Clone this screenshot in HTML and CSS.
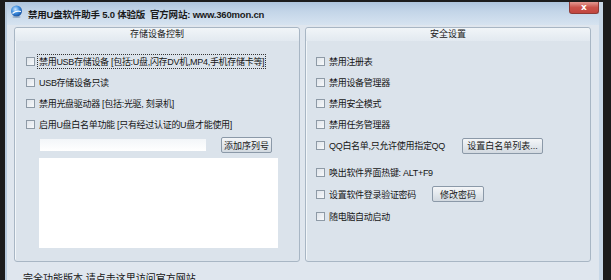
FILE: index.html
```html
<!DOCTYPE html>
<html lang="zh-CN">
<head>
    <meta charset="UTF-8">
    <title>禁用U盘软件助手 5.0 体验版</title>
    <link rel="stylesheet" href="styles.css">
</head>
<body>
    <div class="window">
        <div class="titlebar">
            <svg class="app-icon" width="13" height="13" viewBox="0 0 13 13">
                <defs>
                    <radialGradient id="globe" cx="0.4" cy="0.35" r="0.7">
                        <stop offset="0" stop-color="#cfe8ff"/>
                        <stop offset="0.5" stop-color="#3f8fe0"/>
                        <stop offset="1" stop-color="#12499a"/>
                    </radialGradient>
                </defs>
                <circle cx="6.5" cy="6" r="5.5" fill="url(#globe)"/>
                <path d="M2.5 8.5 Q6 5 11 6.5" stroke="#fff" stroke-width="1.2" fill="none"/>
                <ellipse cx="6.5" cy="12" rx="4" ry="0.9" fill="#6f8aa8" opacity="0.6"/>
            </svg>
            <span class="title">禁用U盘软件助手 5.0 体验版&nbsp;&nbsp;官方网站: www.360mon.cn</span>
            <div class="close-btn">x</div>
        </div>

        <div class="client">
            <div class="groups">
                <!-- 存储设备控制 -->
                <div class="group">
                    <div class="group-title">存储设备控制</div>
                    <div class="group-body left-body">
                        <div class="row"><span class="check"></span><span class="label focused">禁用USB存储设备 [包括:U盘,闪存DV机,MP4,手机存储卡等]</span></div>
                        <div class="row"><span class="check"></span><span class="label">USB存储设备只读</span></div>
                        <div class="row"><span class="check"></span><span class="label">禁用光盘驱动器 [包括:光驱, 刻录机]</span></div>
                        <div class="row"><span class="check"></span><span class="label">启用U盘白名单功能 [只有经过认证的U盘才能使用]</span></div>
                        <div class="serial-row">
                            <div class="text-input"></div>
                            <button class="btn btn-serial">添加序列号</button>
                        </div>
                        <div class="list-box"></div>
                    </div>
                </div>

                <!-- 安全设置 -->
                <div class="group">
                    <div class="group-title">安全设置</div>
                    <div class="group-body right-body">
                        <div class="row"><span class="check"></span><span class="label">禁用注册表</span></div>
                        <div class="row"><span class="check"></span><span class="label">禁用设备管理器</span></div>
                        <div class="row"><span class="check"></span><span class="label">禁用安全模式</span></div>
                        <div class="row"><span class="check"></span><span class="label">禁用任务管理器</span></div>
                        <div class="row"><span class="check"></span><span class="label qq-label">QQ白名单,只允许使用指定QQ</span><button class="btn btn-white">设置白名单列表...</button></div>
                        <div class="row row-gap"><span class="check"></span><span class="label">唤出软件界面热键: ALT+F9</span></div>
                        <div class="row"><span class="check"></span><span class="label pwd-label">设置软件登录验证密码</span><button class="btn btn-pwd">修改密码</button></div>
                        <div class="row"><span class="check"></span><span class="label">随电脑自动启动</span></div>
                    </div>
                </div>
            </div>
            <div class="footer">完全功能版本 请点击这里访问官方网站</div>
        </div>
    </div>
</body>
</html>
```

FILE: styles.css
```css
* {
    margin: 0;
    padding: 0;
    box-sizing: border-box;
}

body {
    background: #1c1c1c;
    font-family: 'Liberation Sans', 'Noto Sans CJK SC', sans-serif;
    font-size: 9px;
    color: #151515;
    overflow: hidden;
}

.window {
    margin: 2px 0 0 5px;
    width: 598px;
    height: 300px;
    background: #cddceb;
    border-left: 2px solid #b7c9dc;
    border-right: 4px solid #c9d8e7;
    display: flex;
    flex-direction: column;
}

/* barre de titre */
.titlebar {
    height: 23px;
    display: flex;
    align-items: flex-start;
    background: linear-gradient(180deg, #aec4dc 0%, #c3d5e8 40%, #d6e3f0 100%);
}

.app-icon {
    margin: 3px 0 0 3px;
}

.title {
    margin: 5px 0 0 5px;
    font-size: 9.5px;
    font-weight: bold;
    color: #1a1a1a;
    letter-spacing: -0.2px;
}

.close-btn {
    margin-left: auto;
    width: 30px;
    height: 12px;
    background: linear-gradient(180deg, #e39a92 0%, #c9524a 50%, #c2463f 100%);
    border: 1px solid #8f3b36;
    border-top: none;
    border-radius: 0 0 3px 3px;
    color: #fff;
    font-weight: bold;
    font-size: 9px;
    line-height: 10px;
    text-align: center;
    font-family: 'DejaVu Sans', sans-serif;
}

.client {
    flex: 1;
    background: #dfe6ee;
    padding: 2px 0 0 7px;
}

.groups {
    display: flex;
    gap: 5px;
}

.group {
    width: 286px;
    height: 235px;
    border: 1px solid #a8b6c4;
    border-radius: 3px;
    background: #dbe3eb;
    box-shadow: inset 1px 1px 0 #f2f6f9;
}

.group-title {
    height: 13px;
    text-align: center;
    line-height: 13px;
    color: #222;
    background: linear-gradient(180deg, #f1f5f8 0%, #e2e9f0 100%);
    border-radius: 3px 3px 0 0;
}

.group-body {
    padding-top: 10px;
}

.left-body {
    padding-left: 11px;
}

.right-body {
    padding-left: 10px;
}

.row {
    height: 21px;
    display: flex;
    align-items: center;
}

.row-gap {
    margin-top: 5px;
    height: 22px;
}

.right-body .row-gap ~ .row {
    height: 22px;
}

.check {
    width: 9px;
    height: 9px;
    border: 1px solid #8e9aa6;
    background: linear-gradient(135deg, #dfe4ea 0%, #f7f9fb 100%);
    margin-right: 3px;
    flex-shrink: 0;
}

.label {
    white-space: nowrap;
    padding: 0 1px;
    letter-spacing: -0.3px;
}

.focused {
    outline: 1px dotted #333;
}

.qq-label {
    width: 134px;
}

.pwd-label {
    width: 104px;
}

.btn {
    font-family: inherit;
    font-size: 9px;
    height: 16px;
    padding: 0;
    white-space: nowrap;
    color: #1a1a1a;
    border: 1px solid #8b99a8;
    border-radius: 2px;
    background: linear-gradient(180deg, #f4f6f8 0%, #e3e8ed 50%, #d2d9e0 100%);
}

.btn-white {
    width: 81px;
}

.btn-pwd {
    width: 52px;
}

.serial-row {
    display: flex;
    align-items: center;
    margin-top: 2px;
    padding-left: 14px;
    height: 16px;
}

.text-input {
    width: 166px;
    height: 12px;
    background: linear-gradient(180deg, #f3f6f9 0%, #ffffff 100%);
}

.btn-serial {
    width: 51px;
    margin-left: 15px;
}

.list-box {
    margin: 5px 0 0 13px;
    width: 239px;
    height: 90px;
    background: #fff;
}

.footer {
    padding: 8px 0 0 9px;
    font-size: 10px;
}
```
